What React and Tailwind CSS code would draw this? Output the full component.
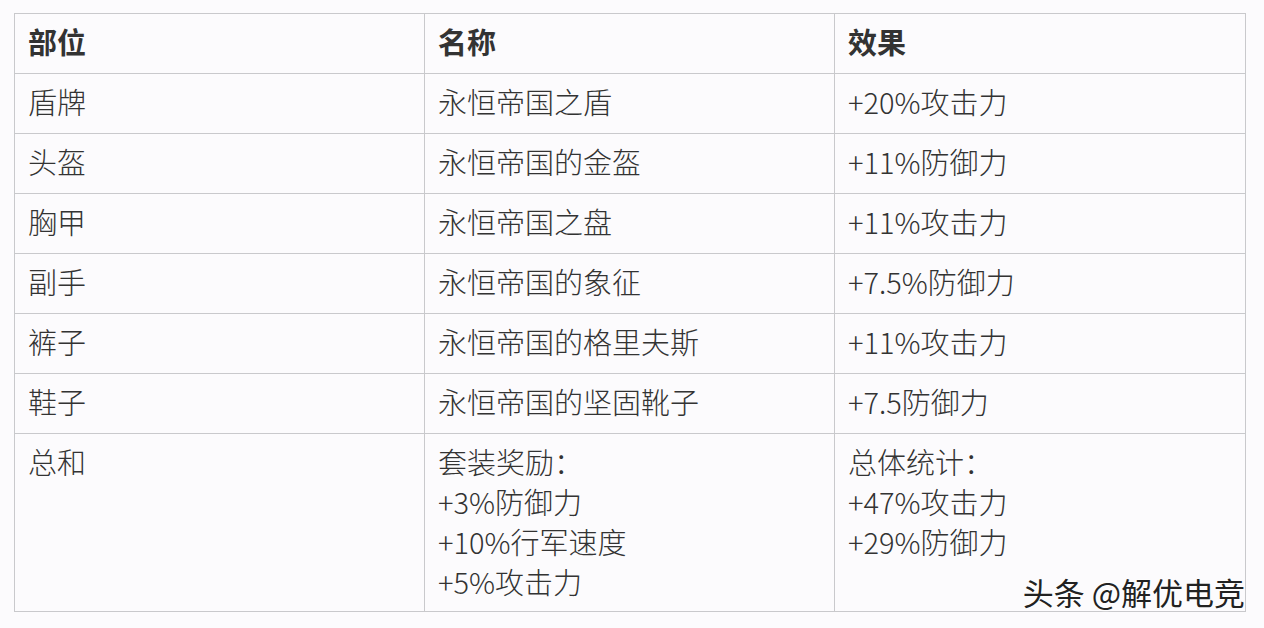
export default function App() {
  const rows = [
    ["盾牌", "永恒帝国之盾", "+20%攻击力"],
    ["头盔", "永恒帝国的金盔", "+11%防御力"],
    ["胸甲", "永恒帝国之盘", "+11%攻击力"],
    ["副手", "永恒帝国的象征", "+7.5%防御力"],
    ["裤子", "永恒帝国的格里夫斯", "+11%攻击力"],
    ["鞋子", "永恒帝国的坚固靴子", "+7.5防御力"],
  ];
  const cell = "border border-[#c9c9cc] px-[13px] pt-[7px] pb-0 align-top leading-[40px]";
  return (
    <div
      className="relative w-[1264px] h-[628px] bg-[#fcfbfd] text-[#333] text-[29px] font-light overflow-hidden"
      style={{ fontFamily: '"Noto Sans CJK SC", "Noto Sans", sans-serif' }}
    >
      <div className="pt-[13px] pl-[14px]">
        <table className="border-collapse table-fixed w-[1231px]">
          <colgroup>
            <col className="w-[410px]" />
            <col className="w-[410px]" />
            <col className="w-[411px]" />
          </colgroup>
          <thead>
            <tr className="h-[60px]">
              <th className={cell + " text-left font-bold"}>部位</th>
              <th className={cell + " text-left font-bold"}>名称</th>
              <th className={cell + " text-left font-bold"}>效果</th>
            </tr>
          </thead>
          <tbody>
            {rows.map((r) => (
              <tr key={r[0]} className="h-[60px]">
                <td className={cell}>{r[0]}</td>
                <td className={cell}>{r[1]}</td>
                <td className={cell}>{r[2]}</td>
              </tr>
            ))}
            <tr className="h-[178px]">
              <td className={cell}>总和</td>
              <td className={cell}>
                <div>套装奖励：</div>
                <div>+3%防御力</div>
                <div>+10%行军速度</div>
                <div>+5%攻击力</div>
              </td>
              <td className={cell}>
                <div>总体统计：</div>
                <div>+47%攻击力</div>
                <div>+29%防御力</div>
              </td>
            </tr>
          </tbody>
        </table>
      </div>
      <div
        className="absolute right-[19px] top-[572px] text-[31px] leading-[40px] font-normal text-[#222]"
        style={{ textShadow: "0 0 2px #fff, 0 0 2px #fff, 0 0 3px #fff" }}
      >
        头条 @解优电竞
      </div>
    </div>
  );
}
